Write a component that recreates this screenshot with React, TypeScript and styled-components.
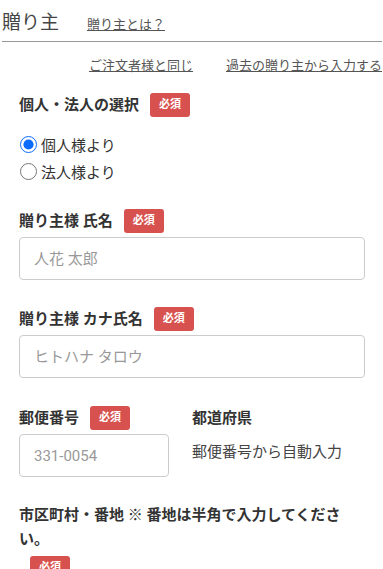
import * as React from 'react'
import styled, { createGlobalStyle } from 'styled-components'

const GlobalStyle = createGlobalStyle`
  body {
    margin: 0;
    background: #fff;
    font-family: Roboto, "Noto Sans CJK JP", sans-serif;
    color: #333;
  }
`

const Page = styled.div`
  padding: 0 1px 0 2px;
`

const Header = styled.div`
  display: flex;
  align-items: baseline;
  padding: 9px 0 4px;
  border-bottom: 1px solid #999;
`

const Title = styled.h2`
  margin: 0;
  font-size: 19px;
  line-height: 28px;
  font-weight: 400;
  color: #444;
`

const HelpLink = styled.a`
  margin-left: 28px;
  font-size: 13px;
  color: #555;
  text-decoration: underline;
`

const LinkRow = styled.div`
  display: flex;
  justify-content: flex-end;
  gap: 33px;
  margin-top: 14px;
  font-size: 13px;
  line-height: 20px;
`

const TextLink = styled.a`
  color: #555;
  text-decoration: underline;
`

const Form = styled.div`
  padding: 0 17px;
`

const Section = styled.div<{ $top: number }>`
  margin-top: ${p => p.$top}px;
`

const Label = styled.div`
  font-size: 15px;
  font-weight: 700;
  line-height: 24px;
  color: #333;
  margin-bottom: 4px;
`

const Badge = styled.span<{ $block?: boolean }>`
  display: ${p => (p.$block ? 'table' : 'inline-block')};
  vertical-align: middle;
  margin-left: 11px;
  margin-top: ${p => (p.$block ? '5px' : '-2px')};
  width: 40px;
  height: 24px;
  line-height: 24px;
  border-radius: 3px;
  background: #d7524e;
  color: #fff;
  font-size: 11px;
  font-weight: 700;
  text-align: center;
`

const RadioGroup = styled.div`
  padding-top: 10px;
`

const RadioRow = styled.label`
  display: flex;
  align-items: center;
  height: 27px;
  font-size: 15px;
  color: #333;
`

const Radio = styled.input`
  width: 17px;
  height: 17px;
  margin: 0 4px 0 1px;
  accent-color: #0a6cff;
`

const TextInput = styled.input<{ $width?: number }>`
  display: block;
  box-sizing: border-box;
  width: ${p => (p.$width ? `${p.$width}px` : '100%')};
  height: 43px;
  padding: 0 14px;
  border: 1px solid #ccc;
  border-radius: 4px;
  font-family: Roboto, "Noto Sans CJK JP", sans-serif;
  font-size: 15px;
  color: #333;
  background: #fff;

  &::placeholder {
    color: #999;
  }
`

const PostalRow = styled.div`
  display: flex;
  gap: 23px;
`

const Column = styled.div``

const AutoValue = styled.div`
  padding-top: 7px;
  font-size: 15px;
  line-height: 22px;
  color: #444;
`

export default function App() {
  return (
    <Page>
      <GlobalStyle />
      <Header>
        <Title>贈り主</Title>
        <HelpLink>贈り主とは？</HelpLink>
      </Header>
      <LinkRow>
        <TextLink>ご注文者様と同じ</TextLink>
        <TextLink>過去の贈り主から入力する</TextLink>
      </LinkRow>
      <Form>
        <Section $top={17}>
          <Label>
            個人・法人の選択<Badge>必須</Badge>
          </Label>
          <RadioGroup>
            <RadioRow>
              <Radio type="radio" name="kind" defaultChecked />
              個人様より
            </RadioRow>
            <RadioRow>
              <Radio type="radio" name="kind" />
              法人様より
            </RadioRow>
          </RadioGroup>
        </Section>
        <Section $top={24}>
          <Label>
            贈り主様 氏名<Badge>必須</Badge>
          </Label>
          <TextInput placeholder="人花 太郎" />
        </Section>
        <Section $top={27}>
          <Label>
            贈り主様 カナ氏名<Badge>必須</Badge>
          </Label>
          <TextInput placeholder="ヒトハナ タロウ" />
        </Section>
        <Section $top={28}>
          <PostalRow>
            <Column>
              <Label>
                郵便番号<Badge>必須</Badge>
              </Label>
              <TextInput $width={150} placeholder="331-0054" />
            </Column>
            <Column>
              <Label>都道府県</Label>
              <AutoValue>郵便番号から自動入力</AutoValue>
            </Column>
          </PostalRow>
        </Section>
        <Section $top={26}>
          <Label>
            市区町村・番地 ※ 番地は半角で入力してください。
            <Badge $block>必須</Badge>
          </Label>
        </Section>
      </Form>
    </Page>
  )
}
